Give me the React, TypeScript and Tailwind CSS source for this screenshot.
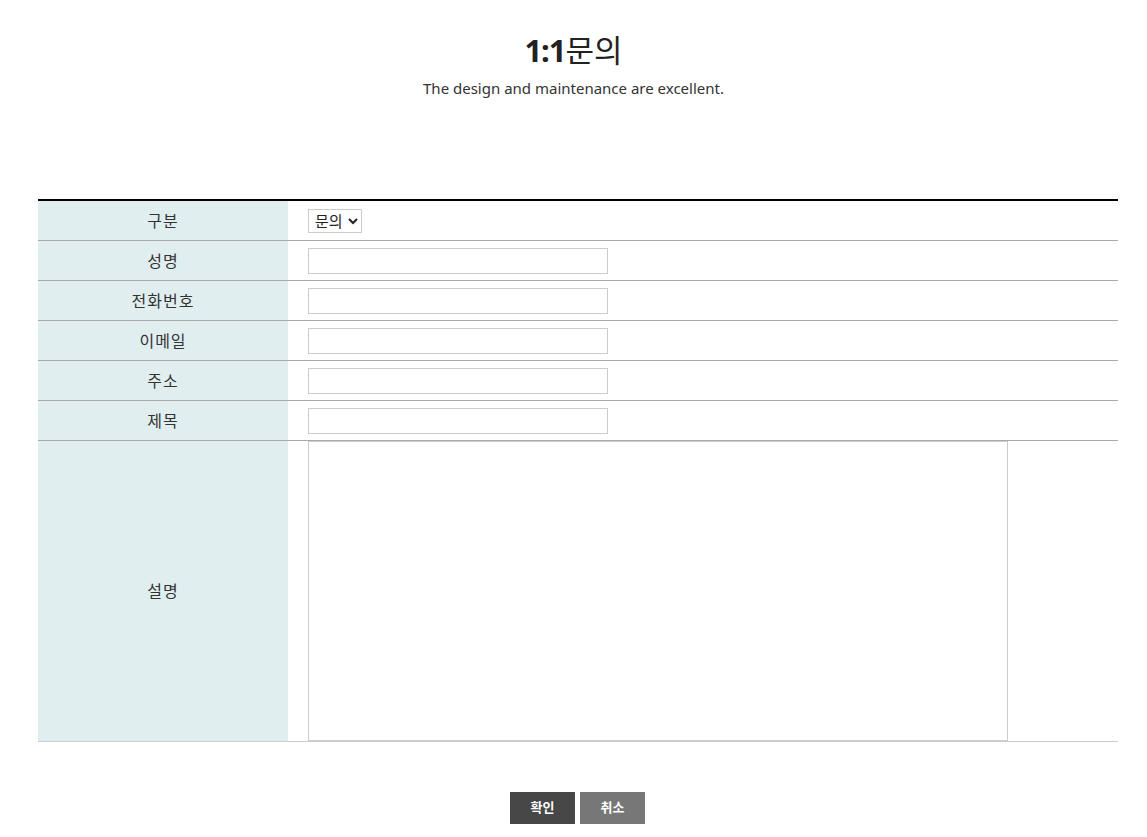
import React from "react";

const font = { fontFamily: '"Noto Sans", "Noto Sans CJK KR", sans-serif' };

const rows = [
  { label: "구분", type: "select" },
  { label: "성명", type: "input" },
  { label: "전화번호", type: "input" },
  { label: "이메일", type: "input" },
  { label: "주소", type: "input" },
  { label: "제목", type: "input" },
];

export default function App() {
  return (
    <div className="min-h-screen bg-white text-[#333]" style={font}>
      <div className="pt-[27px] text-center">
        <h1 className="text-[31px] leading-[46px] text-[#222]">
          <span className="font-bold tracking-[-1px]">1:1</span>문의
        </h1>
        <p className="mt-[4px] text-[15px] leading-[22px] text-[#333]">
          The design and maintenance are excellent.
        </p>
      </div>

      <div className="mx-[38px] mt-[100px] w-[1080px] border-t-2 border-black">
        {rows.map((row) => (
          <div key={row.label} className="flex h-[40px] border-b border-[#a9a9a9]">
            <div className="flex w-[250px] items-center justify-center bg-[#e1eef0] text-[16px] tracking-[1px]">
              {row.label}
            </div>
            <div className="flex flex-1 items-center pl-[20px]">
              {row.type === "select" ? (
                <select className="h-[24px] border border-[#ccc] bg-white px-[2px] text-[15px] text-[#222]">
                  <option>문의</option>
                </select>
              ) : (
                <input className="h-[26px] w-[300px] border border-[#ccc] bg-white" />
              )}
            </div>
          </div>
        ))}
        <div className="flex h-[301px] border-b border-[#ccc]">
          <div className="flex w-[250px] items-center justify-center bg-[#e1eef0] text-[16px] tracking-[1px]">
            설명
          </div>
          <div className="flex-1 pl-[20px]">
            <textarea className="block h-[300px] w-[700px] resize-none border border-[#ccc]" />
          </div>
        </div>
      </div>

      <div className="mt-[50px] flex justify-center gap-[5px] pl-[8px]">
        <button className="h-[32px] w-[65px] bg-[#474747] text-[13px] font-bold text-white">
          확인
        </button>
        <button className="h-[32px] w-[65px] bg-[#777] text-[13px] font-bold text-white">
          취소
        </button>
      </div>
    </div>
  );
}
